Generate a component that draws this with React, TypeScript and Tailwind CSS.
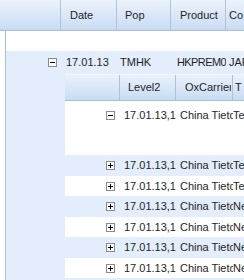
import React from "react";

const ExpandBox = ({ open }: { open: boolean }) => (
  <svg width="9" height="9" viewBox="0 0 9 9" className="block">
    <rect x="0.5" y="0.5" width="8" height="8" fill="#ffffff" stroke="#8a8a8a" />
    <line x1="2" y1="4.5" x2="7" y2="4.5" stroke="#000000" />
    {!open && <line x1="4.5" y1="2" x2="4.5" y2="7" stroke="#000000" />}
  </svg>
);

const detailRows = [
  { third: "Te" },
  { third: "Te" },
  { third: "Te" },
  { third: "Ne" },
  { third: "Ne" },
  { third: "Ne" },
  { third: "Ne" },
];

export default function App() {
  return (
    <div className="w-[244px] h-[280px] overflow-hidden bg-white text-[11px] text-[#1f1f1f] font-['Liberation_Sans',Arial,sans-serif] select-none">
      {/* Master header */}
      <div className="flex h-[31px] border-b border-[#a9bfd6] bg-gradient-to-b from-[#ecf3fc] to-[#c9dbf4] whitespace-nowrap">
        <div className="w-[61px] shrink-0 border-r border-[#aec3da]" />
        <div className="w-[56px] shrink-0 border-r border-[#aec3da] flex items-center pl-[9px]">Date</div>
        <div className="w-[54px] shrink-0 border-r border-[#aec3da] flex items-center pl-[8px]">Pop</div>
        <div className="w-[55px] shrink-0 border-r border-[#aec3da] flex items-center pl-[9px]">Product</div>
        <div className="flex-1 flex items-center pl-[3px] overflow-hidden">Co</div>
      </div>

      {/* Body */}
      <div className="ml-[5px] border-l border-[#a9bfd6] h-[249px]">
        <div className="h-[20px] bg-white" />

        <div className="bg-[#e3edfb] h-[229px]">
          {/* Master data row */}
          <div className="flex h-[23px] items-center whitespace-nowrap">
            <div className="w-[55px] shrink-0 flex justify-end pr-[4px]">
              <ExpandBox open />
            </div>
            <div className="w-[56px] shrink-0 pl-[5px] pr-[2px] overflow-hidden">17.01.13</div>
            <div className="w-[54px] shrink-0 pl-[3px] pr-[2px] overflow-hidden">TMHK</div>
            <div className="w-[55px] shrink-0 pl-[6px] pr-[2px] overflow-hidden tracking-[-0.6px]">HKPREM0</div>
            <div className="flex-1 pl-[3px] overflow-hidden">JAP</div>
          </div>

          {/* Detail grid */}
          <div className="flex">
            <div className="w-[59px] shrink-0" />
            <div className="flex-1 overflow-hidden">
              <div className="flex h-[27px] border-t border-[#f4f8fe] border-b border-b-[#a9bfd6] bg-gradient-to-b from-[#eaf2fc] to-[#c8dbf4] whitespace-nowrap">
                <div className="w-[55px] shrink-0 border-r border-[#aec3da]" />
                <div className="w-[56px] shrink-0 border-r border-[#aec3da] flex items-center pl-[8px]">Level2</div>
                <div className="w-[57px] shrink-0 border-r border-[#aec3da] flex items-center pl-[9px] pr-[1px] overflow-hidden">
                  <span className="overflow-hidden">OxCarrier</span>
                </div>
                <div className="flex-1 flex items-center pl-[2px] overflow-hidden">T</div>
              </div>

              {detailRows.map((row, i) => {
                const first = i === 0;
                const blue = i % 2 === 1;
                return (
                  <div
                    key={i}
                    className={`${first ? "h-[54px] bg-white" : blue ? "h-[21px] bg-[#e3edfb]" : "h-[20px] bg-white"}`}
                  >
                    <div className={`flex items-center whitespace-nowrap ${first ? "h-[28px]" : "h-full"}`}>
                      <div className="w-[55px] shrink-0 flex justify-end pr-[5px]">
                        <ExpandBox open={first} />
                      </div>
                      <div className="w-[56px] shrink-0 pl-[4px] overflow-hidden">17.01.13,1</div>
                      <div className="w-[57px] shrink-0 pl-[4px] pr-[2px] overflow-hidden">China Tietc</div>
                      <div className="flex-1 overflow-hidden">{row.third}</div>
                    </div>
                  </div>
                );
              })}
            </div>
          </div>
        </div>
      </div>
    </div>
  );
}
